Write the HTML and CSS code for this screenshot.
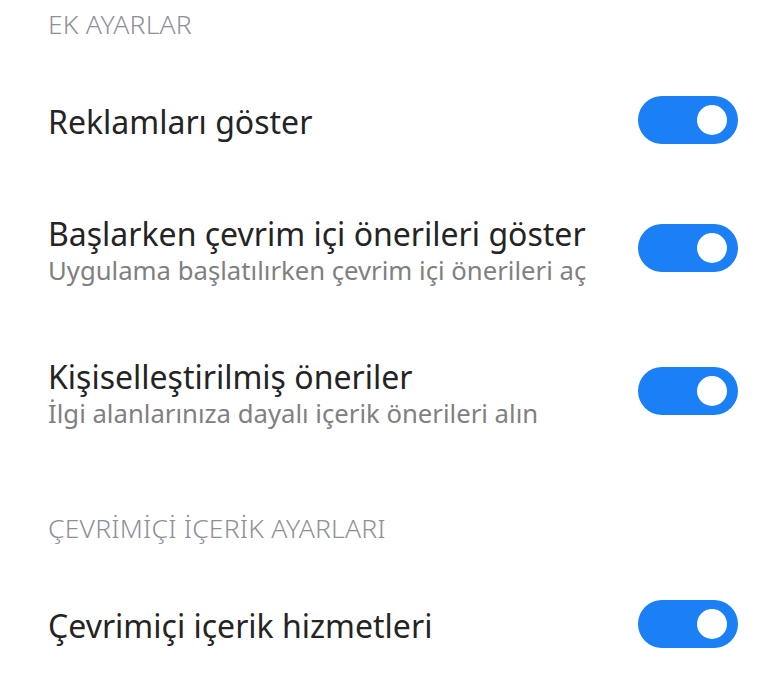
FILE: index.html
```html
<!DOCTYPE html>
<html lang="tr">
<head>
    <meta charset="UTF-8">
    <meta name="viewport" content="width=device-width, initial-scale=1.0">
    <title>Ek ayarlar</title>
    <link rel="stylesheet" href="styles.css">
</head>
<body>
    <div class="settings">
        <section class="section">
            <h2 class="section-title">EK AYARLAR</h2>
            <div class="row">
                <div class="row-text">
                    <div class="row-title">Reklamları göster</div>
                </div>
                <span class="switch on"><span class="knob"></span></span>
            </div>
            <div class="row has-sub">
                <div class="row-text">
                    <div class="row-title">Başlarken çevrim içi önerileri göster</div>
                    <div class="row-sub">Uygulama başlatılırken çevrim içi önerileri aç</div>
                </div>
                <span class="switch on"><span class="knob"></span></span>
            </div>
            <div class="row has-sub">
                <div class="row-text">
                    <div class="row-title">Kişiselleştirilmiş öneriler</div>
                    <div class="row-sub">İlgi alanlarınıza dayalı içerik önerileri alın</div>
                </div>
                <span class="switch on"><span class="knob"></span></span>
            </div>
        </section>
        <section class="section">
            <h2 class="section-title">ÇEVRİMİÇİ İÇERİK AYARLARI</h2>
            <div class="row">
                <div class="row-text">
                    <div class="row-title">Çevrimiçi içerik hizmetleri</div>
                </div>
                <span class="switch on"><span class="knob"></span></span>
            </div>
        </section>
    </div>
</body>
</html>
```

FILE: styles.css
```css
body {
    margin: 0;
    background-color: #ffffff;
    font-family: 'Noto Sans', 'Liberation Sans', sans-serif;
    overflow: hidden;
}
.settings {
    padding: 0 33px 0 48px;
}
.section + .section {
    margin-top: 39px;
}
.section-title {
    margin: 0;
    padding: 10px 0 27px;
    font-size: 26.5px;
    line-height: 28px;
    font-weight: 300;
    letter-spacing: 0.2px;
    color: #8e9099;
}
.row {
    display: flex;
    align-items: center;
    justify-content: space-between;
    min-height: 114px;
}
.row.has-sub {
    min-height: 143px;
}
.row-text {
    flex: 1;
}
.row-title {
    font-size: 32px;
    line-height: 40px;
    color: #242424;
}
.row-sub {
    font-size: 25.7px;
    line-height: 34px;
    color: #808080;
}
.switch {
    position: relative;
    flex: none;
    width: 100px;
    height: 48px;
    border-radius: 24px;
    background-color: #c9c9c9;
}
.row .switch {
    margin-bottom: 4px;
}
.has-sub .switch {
    margin-bottom: 6px;
}
.switch.on {
    background-color: #1b7ff5;
}
.knob {
    position: absolute;
    top: 9px;
    left: 11px;
    width: 30px;
    height: 30px;
    border-radius: 50%;
    background-color: #ffffff;
}
.switch.on .knob {
    left: auto;
    right: 11px;
}
```
